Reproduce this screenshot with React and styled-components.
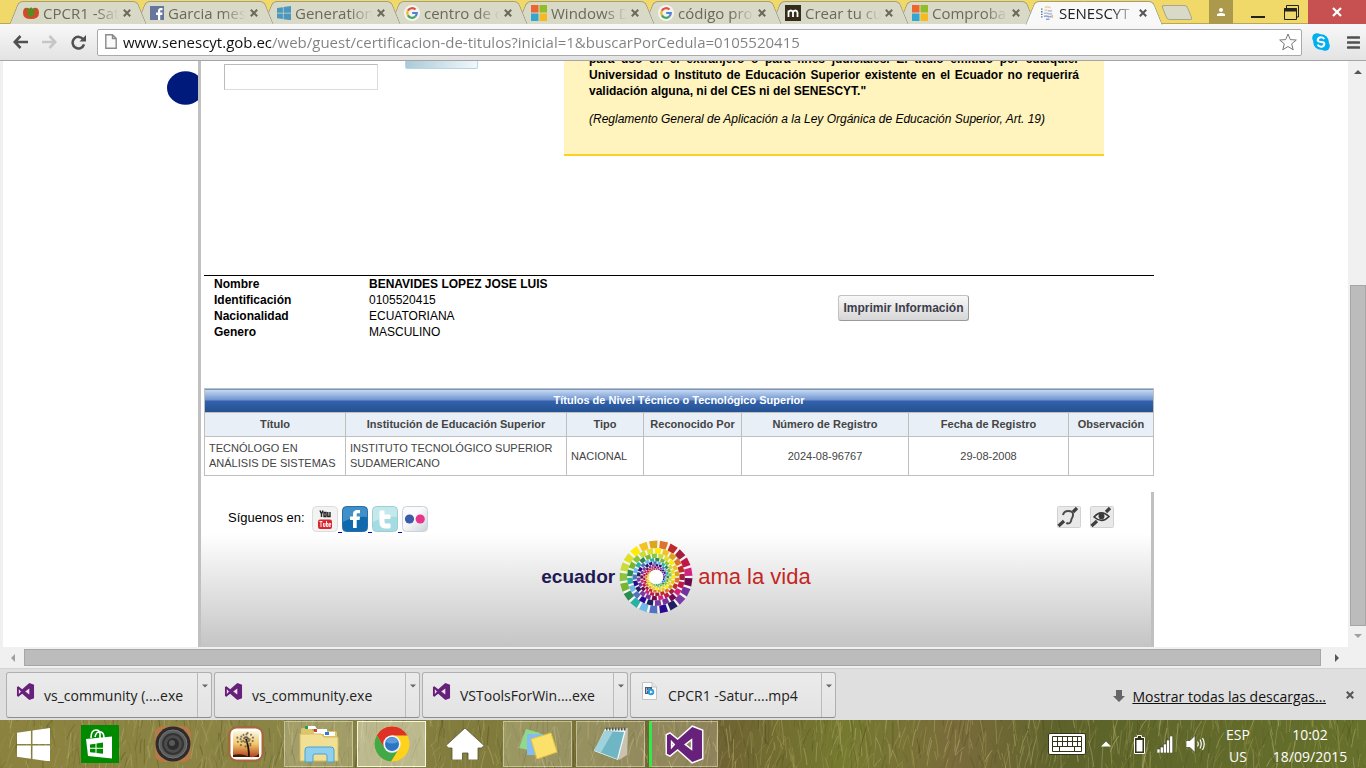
import React from "react";
import styled, { createGlobalStyle, css } from "styled-components";

const uiFont = `"Open Sans", "Noto Sans", sans-serif`;
const pageFont = `"Liberation Sans", Arial, sans-serif`;

const GlobalStyle = createGlobalStyle`
  *, *::before, *::after { box-sizing: border-box; }
  html, body, #root { margin: 0; padding: 0; }
  body { background: #fff; overflow: hidden; font-family: ${pageFont}; }
  button { font: inherit; color: inherit; margin: 0; padding: 0; border: 0; background: none; }
  svg { display: block; flex: none; }
`;

const Desktop = styled.div`
  display: flex;
  flex-direction: column;
  height: 100vh;
  min-width: 1200px;
  overflow: hidden;
`;

/* ---------- Tab strip ---------- */

const TabStrip = styled.header`
  display: flex;
  height: 24px;
  flex: none;
  background: #f0d869;
  box-shadow: inset 0 -1px #b8a65a;
  font-family: ${uiFont};
`;

const TabList = styled.nav`
  display: flex;
  padding-left: 14px;
`;

const Tab = styled.div`
  position: relative;
  z-index: ${(p) => p.$z};
  display: flex;
  align-items: center;
  width: 127px;
  height: 24px;
  padding: 2px 6px 0 9px;
  &::before,
  &::after {
    content: "";
    position: absolute;
    z-index: -1;
    top: 1px;
    height: ${(p) => (p.$active ? 24 : 23)}px;
    background: ${(p) => (p.$active ? "#f8f8f8" : "#d9d9c7")};
    border-top: 1px solid #a39f80;
  }
  &::before {
    left: 0;
    width: 70px;
    transform: skewX(-22deg);
    border-left: 1px solid #98957c;
    border-top-left-radius: 5px;
  }
  &::after {
    left: 58px;
    width: 70px;
    transform: skewX(22deg);
    border-right: 1px solid #98957c;
    border-top-right-radius: 5px;
  }
`;

const TabTitle = styled.a`
  flex: 1;
  margin-left: 4px;
  overflow: hidden;
  white-space: nowrap;
  font-size: 15px;
  line-height: 20px;
  text-decoration: none;
  color: ${(p) => (p.$active ? "#222" : "#6a6a58")};
  mask-image: linear-gradient(90deg, #000 70%, transparent);
`;

const TabClose = styled.button`
  display: flex;
  align-items: center;
  justify-content: center;
  width: 16px;
  height: 16px;
`;

const NewTab = styled.button`
  width: 26px;
  height: 15px;
  margin: 5px 0 0 7px;
  background: #d9d9c7;
  border: 1px solid #a8a68c;
  border-radius: 3px;
  transform: skewX(22deg);
`;

const WindowControls = styled.div`
  display: flex;
  margin-left: auto;
`;

const WindowButton = styled.button`
  display: flex;
  align-items: center;
  justify-content: center;
  width: ${(p) => p.$w}px;
  height: 24px;
  margin-left: ${(p) => p.$gap || 0}px;
  background: ${(p) => p.$bg || "transparent"};
`;

/* ---------- Toolbar ---------- */

const Toolbar = styled.div`
  position: relative;
  z-index: 2;
  display: flex;
  align-items: center;
  flex: none;
  height: 37px;
  padding: 0 6px 0 13px;
  background: linear-gradient(#f8f8f8, #e3e3e3);
  border-bottom: 1px solid #a6a4a6;
  font-family: ${uiFont};
`;

const ToolButton = styled.button`
  display: flex;
  margin-right: ${(p) => p.$gap}px;
`;

const AddressBar = styled.div`
  display: flex;
  align-items: center;
  flex: 1;
  height: 27px;
  margin-right: 10px;
  padding: 0 4px 0 7px;
  background: #fff;
  border: 1px solid #aaa;
  border-radius: 2px;
`;

const UrlInput = styled.input`
  flex: 1;
  min-width: 0;
  margin-left: 6px;
  padding: 0;
  border: 0;
  outline: 0;
  font: 15px/20px ${uiFont};
  color: transparent;
  background: linear-gradient(90deg, #111 149px, #808080 149px);
  -webkit-background-clip: text;
  background-clip: text;
`;

/* ---------- Page viewport ---------- */

const Viewport = styled.div`
  display: flex;
  flex: 1;
  min-height: 0;
  border-left: 3px solid #f0f0f0;
`;

const Scrolled = styled.main`
  flex: 1;
  min-width: 0;
  overflow: hidden;
  padding-left: 1px;
`;

const Columns = styled.div`
  display: grid;
  grid-template-columns: 1fr 956px 1fr;
  margin-top: -10px;
  background: #fff;
`;

const Gutter = styled.div`
  display: flex;
  justify-content: flex-end;
  padding-top: 20px;
  overflow: hidden;
`;

const Site = styled.div`
  border-left: 3px solid #c0c0c0;
  font-size: 12px;
  line-height: 16px;
  color: #000;
`;

const SearchSection = styled.section`
  display: flex;
  height: 224px;
  padding: 0 50px 0 23px;
`;

const Field = styled.div`
  display: flex;
  flex-direction: column;
  width: 181px;
  label {
    height: 13px;
    line-height: 5px;
    white-space: nowrap;
  }
  input {
    width: 154px;
    height: 26px;
    border: 1px solid #dcdcdc;
    border-top-color: #bbb;
    border-left-color: #bbb;
  }
`;

const SearchButton = styled.button`
  width: 73px;
  height: 18px;
  background: linear-gradient(100deg, #a8c9d6, #f2f8fb);
  border: 1px solid #b4d9e4;
  border-top: 0;
  border-radius: 2px;
`;

const Notice = styled.aside`
  width: 540px;
  height: 105px;
  margin-left: auto;
  padding: 0 25px;
  background: #fff3be;
  border-bottom: 2px solid #ffd021;
  p {
    margin: 0 0 12px;
    text-align: justify;
  }
`;

const Person = styled.section`
  display: flex;
  height: 113px;
  margin-left: 3px;
  border-top: 1px solid #000;
`;

const PersonTable = styled.table`
  align-self: flex-start;
  border-collapse: collapse;
  th, td { padding: 0; text-align: left; }
  th { width: 165px; padding-left: 10px; }
  tr:first-child td { font-weight: bold; }
`;

const PrintButton = styled.button`
  width: 131px;
  height: 26px;
  margin: 19px 185px 0 auto;
  font-weight: bold;
  color: #3c3c4c;
  white-space: nowrap;
  background: linear-gradient(#f8f8f8, #d6d6d6);
  border: 1px solid #c2c2c2;
  border-right-color: #999;
  border-bottom-color: #999;
  border-radius: 3px;
`;

const TitlesTable = styled.table`
  width: 950px;
  margin-left: 3px;
  table-layout: fixed;
  border-collapse: collapse;
  font-size: 11px;
  line-height: 15px;
  color: #444;
  caption, th, td { padding: 0; }
  th, td { border: 1px solid #bfbfbf; }
  thead tr:first-child th {
    height: 24px;
    color: #fff;
    background: linear-gradient(#c9dcf4, #6e93cf 46%, #3563ad 48%, #22508f);
  }
  thead tr:last-child th { height: 24px; background: #e8eff7; }
  td { height: 39px; padding: 0 4px; }
`;

const Centered = styled.td`
  text-align: center;
`;

const Footer = styled.footer`
  position: relative;
  height: 156px;
  margin-top: 16px;
  padding: 14px 37px 0 27px;
  border-right: 3px solid #c0c0c0;
  background: linear-gradient(#fff 41px, #c4c4c4);
`;

const FooterRow = styled.div`
  display: flex;
  height: 34px;
`;

const Follow = styled.span`
  margin-right: 7px;
  font-size: 13px;
  line-height: 24px;
`;

const SocialLink = styled.a`
  position: relative;
  margin-right: 4px;
  ${(p) => !p.$last && css`
    &::after {
      content: "";
      position: absolute;
      top: 26px;
      left: 26px;
      width: 4px;
      height: 1px;
      background: #0000c8;
    }
  `}
`;

const Access = styled.a`
  margin-left: ${(p) => (p.$first ? "auto" : "9px")};
`;

const Brand = styled.div`
  display: flex;
  align-items: center;
  justify-content: center;
  padding-left: 10px;
  line-height: 30px;
  white-space: nowrap;
`;

const BrandLeft = styled.span`
  margin-right: 4px;
  font-size: 19px;
  font-weight: bold;
  color: #211a52;
`;

const BrandRight = styled.span`
  margin-left: 5px;
  font-size: 22px;
  color: #c4261f;
`;

/* ---------- Scroll bars ---------- */

const VScroll = styled.div`
  display: flex;
  flex-direction: column;
  align-items: flex-end;
  width: 18px;
  padding: 7px 0;
  background: #f0f0f0;
  svg { margin-right: 4px; }
`;

const VThumb = styled.div`
  width: 16px;
  height: 341px;
  margin: auto 0 6px;
  background: #bcbcbc;
  border: 1px solid #a6a6a6;
`;

const HScroll = styled.div`
  display: flex;
  align-items: center;
  flex: none;
  height: 21px;
  padding: 0 25px 0 9px;
  background: #f0f0f0;
`;

const HThumb = styled.div`
  flex: 1;
  height: 17px;
  margin: 0 12px 0 7px;
  background: #bcbcbc;
  border: 1px solid #a6a6a6;
`;

/* ---------- Download shelf ---------- */

const Shelf = styled.section`
  display: flex;
  align-items: center;
  flex: none;
  gap: 2px;
  height: 52px;
  padding: 0 8px 0 6px;
  background: #dfdfdf;
  border-top: 1px solid #d2d2d2;
  font-family: ${uiFont};
  font-size: 14px;
  line-height: 20px;
`;

const Download = styled.div`
  display: flex;
  width: 206px;
  height: 46px;
  background: linear-gradient(#ebebeb, #e3e3e3);
  border: 1px solid #b0b0b0;
  border-bottom-color: #8c8c8c;
  border-radius: 3px;
`;

const DownloadFile = styled.button`
  display: flex;
  flex: 1;
  padding: 9px 0 0 9px;
  text-align: left;
  color: #222;
  white-space: nowrap;
  span { margin: 4px 0 0 9px; }
`;

const DownloadMenu = styled.button`
  display: flex;
  justify-content: center;
  width: 14px;
  padding-top: 10px;
  border-left: 1px solid #bbb;
`;

const AllDownloads = styled.div`
  display: flex;
  align-items: center;
  gap: 7px;
  margin: 2px 14px 0 auto;
  a { margin-top: 2px; color: #111; }
`;

/* ---------- Taskbar ---------- */

const TaskbarRoot = styled.nav`
  position: relative;
  display: flex;
  align-items: center;
  flex: none;
  height: 48px;
  overflow: hidden;
  background: linear-gradient(90deg, #8c823f, #8a8446 20%, #7f7a3c 38%, #6f6033 52%, #757a30 62%, #7a6b3c 70%, #5c622a 78%, #66712c);
  color: #fff;
  font-family: ${uiFont};
`;

const Grass = styled.svg`
  position: absolute;
  inset: 0;
  width: 100%;
  height: 48px;
`;

const Launchers = styled.div`
  position: relative;
  display: flex;
  gap: 4px;
`;

const Slot = styled.button`
  display: flex;
  align-items: center;
  justify-content: center;
  width: ${(p) => (p.$start ? 61 : 69)}px;
  height: 46px;
  ${(p) => p.$start && css`padding-left: 5px;`}
  ${(p) => p.$open && css`
    background: rgba(255, 255, 235, ${p.$front ? 0.45 : 0.22});
    border: 1px solid rgba(255, 255, 240, ${p.$front ? 0.85 : 0.4});
  `}
  ${(p) => p.$alert && css`border-left: 3px solid #2eea4b;`}
`;

const Tray = styled.div`
  position: relative;
  display: flex;
  align-items: center;
  margin-left: auto;
  padding-right: 18px;
`;

const TrayButton = styled.button`
  display: flex;
  margin-right: ${(p) => p.$gap}px;
`;

const TrayText = styled.button`
  width: ${(p) => p.$w}px;
  margin-right: ${(p) => p.$gap}px;
  padding-top: 4px;
  font-size: 14px;
  line-height: 22px;
  text-align: center;
  white-space: nowrap;
`;

/* ---------- Icons ---------- */

const Cross = ({ size = 8, color = "#666655", width = 2 }) => (
  <svg width={size} height={size} viewBox="0 0 8 8">
    <path d="M.8.8 7.2 7.2M7.2.8.8 7.2" stroke={color} strokeWidth={width} fill="none" />
  </svg>
);

const Triangle = ({ dir, size = 8, color = "#555" }) => {
  const shapes = {
    up: "M0 6 4 2 8 6Z",
    down: "M0 2 4 6 8 2Z",
    left: "M6 0 2 4 6 8Z",
    right: "M2 0 6 4 2 8Z",
  };
  return (
    <svg width={size} height={size} viewBox="0 0 8 8"><path d={shapes[dir]} fill={color} /></svg>
  );
};

const Tomato = () => (
  <svg width="16" height="16" viewBox="0 0 16 16">
    <path d="M0 8Q0 2 5 3Q8 4 11 3Q16 2 16 8Q16 14 8 14T0 8Z" fill="#d9472b" />
    <path d="M2 3 6 4.500 8 2 10 4.500 14 3 12 6H10.500V8H13L8 12.500 3 8H5.500V6H4Z" fill="#4f8f1e" />
  </svg>
);

const FacebookTab = () => (
  <svg width="14" height="14" viewBox="0 0 14 14">
    <rect width="14" height="14" fill="#66769c" />
    <path d="M8 14V9H6V6.500h2V5c0-2 1-3 3-3h1.500v2.300H11c-.7 0-.8.4-.8 1v1.200h2.300L12.200 9h-2v5Z" fill="#fff" />
  </svg>
);

const WindowsMark = ({ size = 14, color = "#4a98bd" }) => (
  <svg width={size} height={size} viewBox="0 0 32 32">
    <path d="M0 4.500 13.500 2.700V15.500H0ZM15 2.500 32 0V15.500H15ZM0 17H13.500V29.700L0 27.800ZM15 17H32V32.500L15 30Z" fill={color} />
  </svg>
);

const GoogleMark = () => (
  <svg width="16" height="16" viewBox="0 0 16 16">
    <circle cx="8" cy="8" r="8" fill="#f4f4ee" />
    <g fill="none" strokeWidth="2.200">
      <path d="M11.500 4.600A4.800 4.800 0 0 0 3.800 5.800" stroke="#e2513f" />
      <path d="M3.800 5.800A4.800 4.800 0 0 0 3.900 10.400" stroke="#edb82f" />
      <path d="M3.900 10.400A4.800 4.800 0 0 0 11.300 11.500" stroke="#46a35c" />
      <path d="M11.300 11.500A4.800 4.800 0 0 0 12.800 8H8.200" stroke="#4f83d6" />
    </g>
  </svg>
);

const MicrosoftMark = () => (
  <svg width="16" height="16" viewBox="0 0 16 16">
    <rect width="7.500" height="7.500" fill="#ef6530" />
    <rect x="8.500" width="7.500" height="7.500" fill="#93bd26" />
    <rect y="8.500" width="7.500" height="7.500" fill="#35a7cf" />
    <rect x="8.500" y="8.500" width="7.500" height="7.500" fill="#f6b91f" />
  </svg>
);

const BoxM = () => (
  <svg width="16" height="16" viewBox="0 0 16 16">
    <rect width="16" height="16" fill="#332c1a" />
    <path d="M3.500 12V5.500M3.500 7.500Q4 5.500 5.800 5.500T8 7.500V12M8 7.500Q8.500 5.500 10.300 5.500T12.500 7.500V12" stroke="#fff" strokeWidth="1.800" fill="none" />
  </svg>
);

const GlobeLines = () => (
  <svg width="16" height="16" viewBox="0 0 16 16" fill="none" strokeWidth="1.400">
    <path d="M6 2.500Q9 1 11.500 3M5.500 5.500Q7 4.500 8.500 5.500" stroke="#e8cc92" />
    <path d="M9 5.500Q11 6.500 13 5.500M5 8.500Q7 7.500 9 8.500T13 8.500" stroke="#b4bfdc" />
    <path d="M5 11.500Q7 10.500 9 11.500T12.500 11M7 14.200H10.500" stroke="#8fa3d2" />
    <path d="M2.800 3.500V13" stroke="#4a66b0" strokeDasharray="1.300 1.300" />
    <path d="M13.200 10V13" stroke="#e8b27c" />
  </svg>
);

const VisualStudio = ({ size, halo }) => (
  <svg width={size} height={size} viewBox="0 0 40 40">
    <path
      d="M28 2 38 6V34L28 38 13 24.500 5 31 2 29.500V10.500L5 9 13 15.500ZM28 13.500 19.500 20 28 26.500ZM6 15V25L10.500 20Z"
      fill="#68217a" fillRule="evenodd" stroke={halo ? "#fff" : "none"} strokeWidth="3" paintOrder="stroke"
    />
  </svg>
);

const MediaFile = () => (
  <svg width="19" height="18" viewBox="-2 0 19 18">
    <path d="M.5.5H10L14.500 5V17.500H.5Z" fill="#fcfcfc" stroke="#c4c4c4" />
    <path d="M10 .5V5H14.500" fill="#e8e8e8" stroke="#c4c4c4" />
    <rect x="3" y="5" width="7" height="7" fill="#486278" />
    <path d="M4.500 6V11M7 6V11M4.500 8.500H7" stroke="#9bd" />
    <circle cx="9" cy="10" r="3.200" fill="#2b9be0" />
    <path d="M8 8.500 11 10 8 11.500Z" fill="#fff" />
  </svg>
);

const YouTube = () => (
  <svg width="26" height="26" viewBox="0 0 26 26">
    <rect x=".5" y=".5" width="25" height="25" rx="4" fill="#f3f3f3" stroke="#dcdcdc" />
    <path d="M8 4.500 9.500 8 11 4.500M9.500 8V11M12 6.500H14V10.500H12ZM15.800 6V10.500H18V6" stroke="#222" strokeWidth="1.400" fill="none" />
    <rect x="6" y="13.500" width="14" height="9.500" rx="2" fill="#d8282d" />
    <path d="M7.500 15.500H10.500M9 15.500V21M11.500 17V20.500H13V17M14.500 15V20.500H16V17.500H14.500M17.200 19H18.700V17.500H17.200V20.500H18.700" stroke="#fff" strokeWidth=".9" fill="none" />
  </svg>
);

const Facebook = () => (
  <svg width="26" height="26" viewBox="0 0 26 26">
    <rect x=".5" y=".5" width="25" height="25" rx="4" fill="#0f69ae" stroke="#2d6da5" />
    <path d="M1 5Q1 1 5 1H21Q25 1 25 5V11Q12 10 1 16Z" fill="#3f8fc8" />
    <path d="M11 22V14H8V10.500H11V8C11 5 13 4 15 4H18V7.300H16C15 7.300 14.700 7.800 14.700 8.600V10.500H18L17.600 14H14.700V22Z" fill="#fff" />
  </svg>
);

const Twitter = () => (
  <svg width="26" height="26" viewBox="0 0 26 26">
    <rect x=".5" y=".5" width="25" height="25" rx="4" fill="#a5dce2" stroke="#9fcdd4" />
    <path d="M1 5Q1 1 5 1H21Q25 1 25 5V11Q12 10 1 16Z" fill="#c3e9ed" />
    <path d="M8 5H12V9H18V12.500H12V15.500Q12 18 14 18H18V22H13Q8 22 8 17Z" fill="#fff" stroke="#fff" strokeLinejoin="round" />
  </svg>
);

const Flickr = () => (
  <svg width="26" height="26" viewBox="0 0 26 26">
    <defs>
      <linearGradient id="flickr-bg" x2="1" y2="1"><stop offset=".4" stopColor="#fafbfc" /><stop offset="1" stopColor="#cbd3d9" /></linearGradient>
    </defs>
    <rect x=".5" y=".5" width="25" height="25" rx="4" fill="url(#flickr-bg)" stroke="#c8d3dc" />
    <circle cx="7.500" cy="13" r="4.600" fill="#3c5ba9" />
    <circle cx="18.200" cy="13" r="4.600" fill="#e8358c" />
  </svg>
);

const AccessIcon = ({ kind }) => (
  <svg width="24" height="22" viewBox="0 0 24 22" fill="none">
    <rect x=".5" y=".5" width="23" height="21" rx="1" fill="#e9e9e9" stroke="#d2d2d2" />
    <path d="M1.500 20 7 15M16 6 20 2" stroke="#3f3f3f" strokeWidth="3.200" />
    {kind === "ear" ? (
      <path d="M6 9Q7 5 11 5Q16.500 5 16 9Q16 11 14.500 13Q14 17.500 11 17.500Q10 17.500 9.500 16.500" stroke="#4a4a4a" strokeWidth="2" />
    ) : (
      <g stroke="#3a3a3a" strokeWidth="1.600">
        <path d="M4 11Q11 3 19 10.500Q12 18 4 11Z" fill="#ececec" />
        <circle cx="11.500" cy="10.200" r="2.200" fill="#3a3a3a" />
      </g>
    )}
  </svg>
);

const wheelColors = [
  "#dca51c", "#dc742c", "#bf2a2a", "#a31f3f", "#c0164a", "#d2237c", "#6c0b50",
  "#72349c", "#7a3ca2", "#1f1f62", "#2b0a92", "#5272c2", "#70baea", "#29b2a2",
  "#2c8c50", "#79b52e", "#8bc53e", "#c9dc3c", "#e0e028", "#ffec00", "#f2c322",
];

const Wheel = () => {
  const count = wheelColors.length;
  const edges = [36.5, 29, 23.5, 19.200, 15.800, 13, 10.700, 8.800, 7.300];
  const step = (2 * Math.PI) / count;
  const at = (r, a) => `${(37 + r * Math.sin(a)).toFixed(2)} ${(37 - r * Math.cos(a)).toFixed(2)}`;
  const tiles = [];
  for (let ring = 0; ring < edges.length - 1; ring += 1) {
    for (let i = 0; i < count; i += 1) {
      const a = (i - 0.25 + ring * 0.5) * step;
      const h = step * 0.38;
      const color = wheelColors[(i - ring * 2 + count * 2) % count];
      tiles.push(
        <path
          key={`${ring}-${i}`}
          d={`M${at(edges[ring], a - h)}L${at(edges[ring], a + h)}L${at(edges[ring + 1], a + h)}L${at(edges[ring + 1], a - h)}Z`}
          fill={color}
        />
      );
    }
  }
  return (
    <svg width="74" height="74" viewBox="0 0 74 74">
      <circle cx="37" cy="37" r="36" fill="#f4f4f2" />
      {tiles}
      <circle cx="37" cy="37" r="7" fill="#fff" />
    </svg>
  );
};

const blades = (() => {
  let seed = 7;
  const rand = () => {
    seed = (seed * 16807) % 2147483647;
    return seed / 2147483647;
  };
  const tones = ["#a89d58", "#b5ab6a", "#5f5d26", "#4d4c1e", "#8f9240", "#747a2c", "#c0b67c"];
  return Array.from({ length: 1500 }, () => {
    const x = rand() * 1400;
    const y = rand() * 62;
    const len = 8 + rand() * 22;
    const lean = (rand() - 0.4) * 16;
    const tone = tones[Math.floor(rand() * tones.length)];
    return {
      d: `M${x.toFixed(1)} ${y.toFixed(1)}q${(lean / 4).toFixed(1)} ${(-len / 2).toFixed(1)} ${lean.toFixed(1)} ${(-len).toFixed(1)}`,
      tone,
      opacity: (0.15 + rand() * 0.4).toFixed(2),
    };
  });
})();

const GrassArt = () => (
  <Grass viewBox="0 0 1366 48" preserveAspectRatio="none" aria-hidden="true" fill="none">
    {blades.map((b, i) => <path key={i} d={b.d} stroke={b.tone} opacity={b.opacity} />)}
  </Grass>
);

const Store = () => (
  <svg width="38" height="38" viewBox="0 0 38 38">
    <rect width="38" height="38" fill="#008a00" />
    <path d="M10 13Q10 5 15 5Q19 5 19 9V13M14 12Q15 6 20 7Q23 8 23 13" stroke="#fff" strokeWidth="1.600" fill="none" />
    <path d="M5 14 31 11.500V33.500L7 31Z" fill="#fff" />
    <path d="M9 19.500 14.500 18.700V22.700H9ZM15.500 18.500 22 17.500V22.700H15.500ZM9 23.700H14.500V27.800L9 27.200ZM15.500 23.700H22V28.700L15.500 28Z" fill="#008a00" />
  </svg>
);

const Speaker = () => (
  <svg width="38" height="38" viewBox="0 0 38 38">
    <rect x="1" y="1" width="36" height="36" rx="8" fill="#b57a45" />
    <circle cx="19" cy="19" r="17.500" fill="#2c2c2c" />
    <circle cx="19" cy="19" r="14" fill="#5c5c5c" stroke="#777" />
    <circle cx="19" cy="19" r="10" fill="#4c4c4c" stroke="#333" strokeWidth="2" />
    <circle cx="19" cy="19" r="6" fill="#2c2c2c" />
    <circle cx="18" cy="18" r="3" fill="#595959" />
  </svg>
);

const seedHead = Array.from({ length: 26 }, (_, i) => {
  const a = i * 2.4;
  const r = 2 + (i % 5) * 1.7;
  return [19 + Math.cos(a) * r, 14 + Math.sin(a) * r * 0.85];
});

const Dandelion = () => (
  <svg width="38" height="38" viewBox="0 0 38 38">
    <defs>
      <linearGradient id="dusk" x2="0" y2="1"><stop stopColor="#fdf6dd" /><stop offset=".5" stopColor="#f2c76a" /><stop offset="1" stopColor="#b5401c" /></linearGradient>
    </defs>
    <rect x="1" y="1" width="36" height="36" rx="9" fill="#a5683a" />
    <rect x="3.500" y="3.500" width="31" height="31" rx="6" fill="#fff" />
    <rect x="6" y="6" width="26" height="26" rx="3" fill="url(#dusk)" />
    <path d="M19 14Q22 22 22 32" stroke="#1d1309" strokeWidth="1.800" fill="none" />
    {seedHead.map(([x, y], i) => <circle key={i} cx={x} cy={y} r="1.100" fill="#5c5244" opacity=".75" />)}
    <path d="M6 30Q14 28 20 31T32 29V32H6Z" fill="#3c1a0c" />
  </svg>
);

const Explorer = () => (
  <svg width="40" height="38" viewBox="0 0 40 38">
    <path d="M2 5Q2 3 4 3H12L14 6H36Q38 6 38 8V34H2Z" fill="#dfc56a" />
    <path d="M6 1H16L18 4H6Z" fill="#fff" /><rect x="6" y="1" width="3" height="3" fill="#2c9c4b" />
    <path d="M15 4H28V9H15Z" fill="#fff" /><rect x="15" y="4" width="3" height="3" fill="#d23c2e" />
    <path d="M25 7H36V11H25Z" fill="#fff" /><rect x="26" y="7" width="4" height="3" fill="#2e7bd0" />
    <path d="M1 9H22L25 12H39V36H1Z" fill="#f1df93" stroke="#d4bb63" />
    <path d="M6 37V25Q6 22 9 22H32Q35 22 35 25V37H28V31Q28 29 26 29H16Q14 29 14 31V37Z" fill="#8fd0ee" stroke="#4da3cf" />
  </svg>
);

const Chrome = () => (
  <svg width="36" height="36" viewBox="0 0 36 36">
    <circle cx="18" cy="18" r="17.500" fill="#ffd21c" />
    <path d="M2.800 9.300A17.500 17.500 0 0 1 33.200 9.500L18 9.500 9.900 21.500Z" fill="#df3227" />
    <path d="M2.800 9.300A17.500 17.500 0 0 0 17 35.500L25.500 22 18 26 10.500 22Z" fill="#43a847" />
    <circle cx="18" cy="18" r="8.700" fill="#f2f2f2" />
    <circle cx="18" cy="18" r="7" fill="#2a75c4" />
    <path d="M12 16A6.300 6.300 0 0 1 24 16Q18 19 12 16Z" fill="#5b9bdc" />
  </svg>
);

const House = () => (
  <svg width="38" height="32" viewBox="0 0 38 32">
    <path d="M19 0 38 17.500 35.500 20H32V32H22V25H16.500V32H6V20H2.500L0 17.500Z" fill="#fff" stroke="#555531" strokeWidth=".8" />
  </svg>
);

const StickyNotes = () => (
  <svg width="38" height="30" viewBox="0 0 38 30">
    <path d="M7 0 21 4 14 22 0 19Z" fill="#8fd88c" />
    <path d="M8 5H24V26H8Z" fill="#83bcf0" />
    <path d="M12 10 32 4 38 23 18 30Z" fill="#fbe06a" stroke="#e5c440" />
  </svg>
);

const Notepad = () => (
  <svg width="36" height="36" viewBox="0 0 36 36">
    <path d="M13 3 35 2 34 29 26 34Z" fill="#c8c2ae" />
    <path d="M12 3 33 4 25 34 1 25Z" fill="#eaf6f8" />
    <path d="M12 5 31 6 24 33 1 24Z" fill="#6fb6c4" />
    <path d="M12 5 20 5.500 8 26.500 1 24Z" fill="#9fd2da" />
    <path d="M13 3H33" stroke="#555" strokeWidth="3" strokeDasharray="1.500 1.500" />
  </svg>
);

const Keyboard = () => (
  <svg width="38" height="22" viewBox="0 0 38 22">
    <rect x=".5" y=".5" width="37" height="21" rx="1.500" fill="#fff" stroke="#33331a" />
    <path d="M4.500 3.500H33.500V18.500H4.500ZM4.500 8.500H33.500M4.500 13.500H33.500M9.500 3.500V13.500M14.500 3.500V13.500M19.500 3.500V13.500M24.500 3.500V13.500M29.500 3.500V13.500M11.500 13.500V18.500M26.500 13.500V18.500" stroke="#33331a" fill="none" />
  </svg>
);

const Battery = () => (
  <svg width="11" height="19" viewBox="0 0 11 19">
    <path d="M3.500.5H7.500V2.500H10.500V18.500H.5V2.500H3.500Z" fill="#333319" stroke="#fff" />
    <rect x="2.500" y="5" width="6" height="11.500" fill="#fff" />
  </svg>
);

const Signal = () => (
  <svg width="16" height="17" viewBox="0 0 16 17" fill="#fff" stroke="#33331a" strokeWidth=".5">
    <rect x="0" y="13" width="3" height="4" /><rect x="3.200" y="11" width="3" height="6" /><rect x="6.400" y="8" width="3" height="9" />
    <rect x="9.600" y="4" width="3" height="13" /><rect x="12.800" y="0" width="3" height="17" />
  </svg>
);

const Volume = () => (
  <svg width="19" height="18" viewBox="0 0 19 18">
    <path d="M0 5.500H4L9 .5V17.500L4 12.500H0Z" fill="#fff" stroke="#33331a" strokeWidth=".6" />
    <path d="M11.500 6.500Q13 9 11.500 11.500M14 4.500Q16.500 9 14 13.500M16.500 3Q20 9 16.500 15" stroke="#fff" fill="none" strokeWidth="1.200" />
  </svg>
);

/* ---------- Data ---------- */

const tabs = [
  ["CPCR1 -Sat", Tomato],
  ["Garcia mes", FacebookTab],
  ["Generation", WindowsMark],
  ["centro de c", GoogleMark],
  ["Windows D", MicrosoftMark],
  ["código pro", GoogleMark],
  ["Crear tu cu", BoxM],
  ["Comproba", MicrosoftMark],
  ["SENESCYT", GlobeLines],
];

const person = [
  ["Nombre", "BENAVIDES LOPEZ JOSE LUIS"],
  ["Identificación", "0105520415"],
  ["Nacionalidad", "ECUATORIANA"],
  ["Genero", "MASCULINO"],
];

const columns = [
  ["Título", 141],
  ["Institución de Educación Superior", 221],
  ["Tipo", 77],
  ["Reconocido Por", 98],
  ["Número de Registro", 167],
  ["Fecha de Registro", 160],
  ["Observación", 85],
];

const downloads = ["vs_community (....exe", "vs_community.exe", "VSToolsForWin....exe", "CPCR1 -Satur....mp4"];

export default function App() {
  return (
    <Desktop>
      <GlobalStyle />
      <TabStrip>
        <TabList>
          {tabs.map(([title, Icon], i) => {
            const active = i === tabs.length - 1;
            return (
              <Tab key={title} $active={active} $z={active ? 20 : 10 - i}>
                <Icon />
                <TabTitle href="#" $active={active}>{title}</TabTitle>
                <TabClose aria-label="Cerrar pestaña"><Cross color={active ? "#555" : "#6b6a58"} /></TabClose>
              </Tab>
            );
          })}
        </TabList>
        <NewTab aria-label="Nueva pestaña" />
        <WindowControls>
          <WindowButton $w={24} $bg="#ac994c" aria-label="Usuario">
            <svg width="8" height="8" viewBox="0 0 8 8"><circle cx="4" cy="2" r="2" fill="#fff" /><path d="M0 8V6Q4 4 8 6V8Z" fill="#fff" /></svg>
          </WindowButton>
          <WindowButton $w={49} aria-label="Minimizar">
            <svg width="14" height="12" viewBox="0 0 14 12"><path d="M0 11H14" stroke="#222" strokeWidth="2" /></svg>
          </WindowButton>
          <WindowButton $w={19} aria-label="Restaurar">
            <svg width="15" height="15" viewBox="0 0 15 15" fill="none" stroke="#222"><path d="M2.500 3V.5H14.500V12H12" /><path d="M.5 3.500H12.500V14.500H.5Z" /><path d="M0 5H13" strokeWidth="3" /></svg>
          </WindowButton>
          <WindowButton $w={58} $gap={7} $bg="#c75050" aria-label="Cerrar"><Cross size={10} color="#fff" width={1.8} /></WindowButton>
        </WindowControls>
      </TabStrip>

      <Toolbar>
        <ToolButton $gap={14} aria-label="Atrás">
          <svg width="15" height="14" viewBox="0 0 15 14"><path d="M7.500 1 1.800 7 7.500 13M2 7H15" stroke="#505050" strokeWidth="2.600" fill="none" /></svg>
        </ToolButton>
        <ToolButton $gap={14} aria-label="Adelante">
          <svg width="15" height="14" viewBox="0 0 15 14"><path d="M7.500 1 13.200 7 7.500 13M13 7H0" stroke="#c6c6c6" strokeWidth="2.600" fill="none" /></svg>
        </ToolButton>
        <ToolButton $gap={11} aria-label="Recargar">
          <svg width="15" height="15" viewBox="0 0 15 15"><path d="M12.300 4.500A5.800 5.800 0 1 0 13 9.300" stroke="#505050" strokeWidth="2.500" fill="none" /><path d="M15 0V6.500H8.500Z" fill="#505050" /></svg>
        </ToolButton>
        <AddressBar>
          <svg width="12" height="16" viewBox="0 0 12 16"><path d="M.8.8H7.500L11.200 4.500V14.200H.8ZM7.500.8V4.500H11.200" fill="#fafafa" stroke="#8a8a8a" strokeWidth="1.400" /></svg>
          <UrlInput aria-label="Dirección" defaultValue="www.senescyt.gob.ec/web/guest/certificacion-de-titulos?inicial=1&buscarPorCedula=0105520415" />
          <svg width="18" height="18" viewBox="0 0 18 18"><path d="M9 1 11.300 6.600 17.300 7 12.700 10.900 14.200 16.800 9 13.500 3.800 16.800 5.300 10.900.7 7 6.700 6.600Z" fill="#fdfdfd" stroke="#777" /></svg>
        </AddressBar>
        <ToolButton $gap={17} aria-label="Skype">
          <svg width="18" height="18" viewBox="0 0 18 18">
            <circle cx="9" cy="9" r="7.800" fill="#00aff0" /><circle cx="5" cy="5" r="4.800" fill="#00aff0" /><circle cx="13" cy="13" r="4.800" fill="#00aff0" />
            <path d="M12.300 6.200Q11.500 4.300 9 4.300T5.800 6.500T9 8.900T12.300 11.500T9 13.700T5.600 11.700" stroke="#fff" strokeWidth="2" fill="none" />
          </svg>
        </ToolButton>
        <ToolButton $gap={0} aria-label="Menú">
          <svg width="13" height="13" viewBox="0 0 13 13"><path d="M1 1.500H12M1 6.500H12M1 11.500H12" stroke="#505050" strokeWidth="2.600" strokeLinecap="round" /></svg>
        </ToolButton>
      </Toolbar>

      <Viewport>
        <Scrolled>
          <Columns>
            <Gutter>
              <svg width="31" height="34" viewBox="0 0 31 34"><ellipse cx="18.500" cy="17" rx="18.500" ry="16.700" fill="#001a7b" /></svg>
            </Gutter>
            <Site>
              <SearchSection>
                <Field>
                  <label htmlFor="cedula">Identificación (cédula, pasap.)</label>
                  <input id="cedula" type="text" />
                </Field>
                <SearchButton aria-label="Buscar" />
                <Notice>
                  <p>
                    <b>para uso en el extranjero o para fines judiciales. El título emitido por cualquier Universidad o Instituto de Educación Superior existente en el Ecuador no requerirá validación alguna, ni del CES ni del SENESCYT."</b>
                  </p>
                  <p><i>(Reglamento General de Aplicación a la Ley Orgánica de Educación Superior, Art. 19)</i></p>
                </Notice>
              </SearchSection>

              <Person>
                <PersonTable>
                  <tbody>
                    {person.map(([label, value]) => (
                      <tr key={label}><th scope="row">{label}</th><td>{value}</td></tr>
                    ))}
                  </tbody>
                </PersonTable>
                <PrintButton>Imprimir Información</PrintButton>
              </Person>

              <TitlesTable>
                <colgroup>{columns.map(([name, w]) => <col key={name} width={w} />)}</colgroup>
                <thead>
                  <tr><th colSpan={7}>Títulos de Nivel Técnico o Tecnológico Superior</th></tr>
                  <tr>{columns.map(([name]) => <th key={name} scope="col">{name}</th>)}</tr>
                </thead>
                <tbody>
                  <tr>
                    <td>TECNÓLOGO EN ANÁLISIS DE SISTEMAS</td>
                    <td>INSTITUTO TECNOLÓGICO SUPERIOR SUDAMERICANO</td>
                    <td>NACIONAL</td>
                    <td />
                    <Centered>2024-08-96767</Centered>
                    <Centered>29-08-2008</Centered>
                    <td />
                  </tr>
                </tbody>
              </TitlesTable>

              <Footer>
                <FooterRow>
                  <Follow>Síguenos en:</Follow>
                  <SocialLink href="#" aria-label="YouTube"><YouTube /></SocialLink>
                  <SocialLink href="#" aria-label="Facebook"><Facebook /></SocialLink>
                  <SocialLink href="#" aria-label="Twitter"><Twitter /></SocialLink>
                  <SocialLink href="#" aria-label="Flickr" $last><Flickr /></SocialLink>
                  <Access href="#" aria-label="Audición" $first><AccessIcon kind="ear" /></Access>
                  <Access href="#" aria-label="Visión"><AccessIcon kind="eye" /></Access>
                </FooterRow>
                <Brand>
                  <BrandLeft>ecuador</BrandLeft>
                  <Wheel />
                  <BrandRight>ama la vida</BrandRight>
                </Brand>
              </Footer>
            </Site>
            <div />
          </Columns>
        </Scrolled>
        <VScroll>
          <Triangle dir="up" />
          <VThumb />
          <Triangle dir="down" color="#a0a0a0" />
        </VScroll>
      </Viewport>

      <HScroll>
        <Triangle dir="left" color="#a0a0a0" />
        <HThumb />
        <Triangle dir="right" />
      </HScroll>

      <Shelf>
        {downloads.map((name, i) => (
          <Download key={name}>
            <DownloadFile>
              {i < 3 ? <VisualStudio size={19} /> : <MediaFile />}
              <span>{name}</span>
            </DownloadFile>
            <DownloadMenu aria-label="Opciones"><Triangle dir="down" size={6} color="#666" /></DownloadMenu>
          </Download>
        ))}
        <AllDownloads>
          <svg width="12" height="12" viewBox="0 0 12 12"><path d="M3 0H9V6H12L6 12 0 6H3Z" fill="#666" /></svg>
          <a href="#">Mostrar todas las descargas...</a>
        </AllDownloads>
        <TabClose aria-label="Cerrar barra de descargas"><Cross color="#555" /></TabClose>
      </Shelf>

      <TaskbarRoot>
        <GrassArt />
        <Launchers>
          <Slot $start aria-label="Inicio"><WindowsMark size={33} color="#fff" /></Slot>
          <Slot aria-label="Tienda"><Store /></Slot>
          <Slot aria-label="Altavoz"><Speaker /></Slot>
          <Slot aria-label="Fotos"><Dandelion /></Slot>
          <Slot $open aria-label="Explorador"><Explorer /></Slot>
          <Slot $open $front aria-label="Chrome"><Chrome /></Slot>
          <Slot aria-label="Inicio local"><House /></Slot>
          <Slot $open aria-label="Notas"><StickyNotes /></Slot>
          <Slot $open aria-label="Bloc de notas"><Notepad /></Slot>
          <Slot $open $alert aria-label="Visual Studio"><VisualStudio size={39} halo /></Slot>
        </Launchers>
        <Tray>
          <TrayButton $gap={15} aria-label="Teclado"><Keyboard /></TrayButton>
          <TrayButton $gap={23} aria-label="Iconos ocultos"><Triangle dir="up" size={10} color="#fff" /></TrayButton>
          <TrayButton $gap={12} aria-label="Batería"><Battery /></TrayButton>
          <TrayButton $gap={13} aria-label="Red"><Signal /></TrayButton>
          <TrayButton $gap={19} aria-label="Volumen"><Volume /></TrayButton>
          <TrayText $w={28} $gap={20}>ESP<br />US</TrayText>
          <TrayText $w={76} $gap={0}>10:02<br />18/09/2015</TrayText>
        </Tray>
      </TaskbarRoot>
    </Desktop>
  );
}
